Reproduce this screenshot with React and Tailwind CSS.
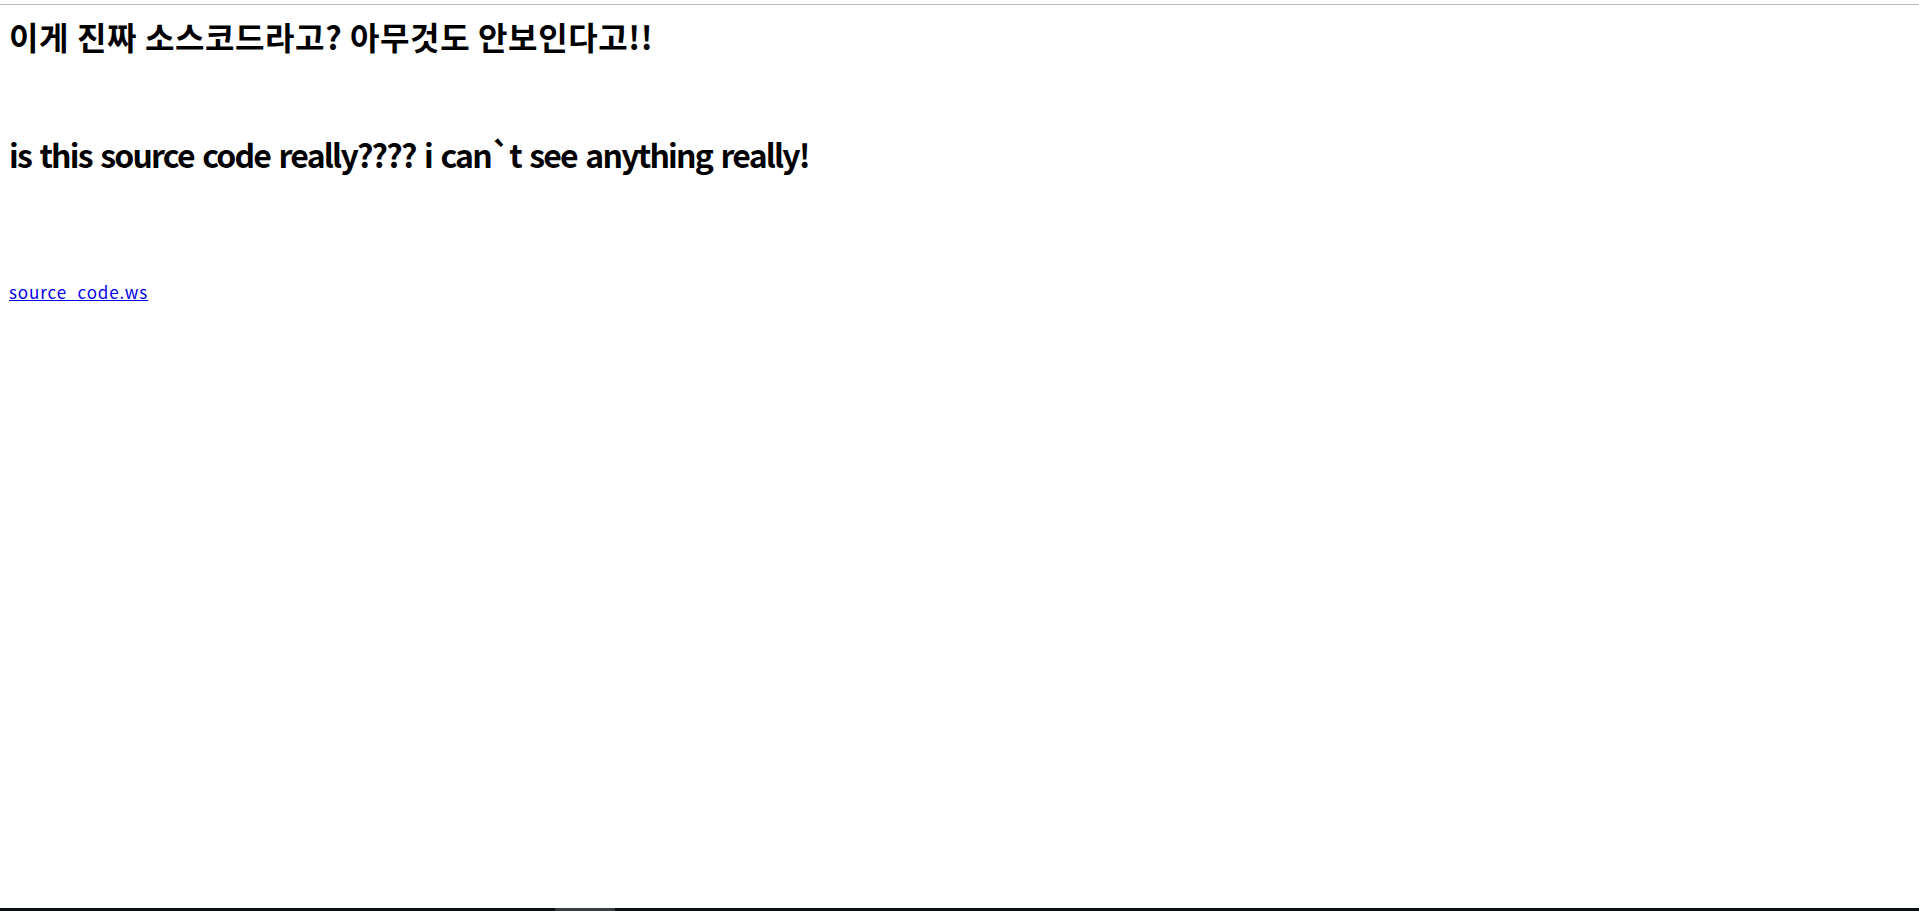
export default function App() {
  return (
    <div className="min-h-[911px] flex flex-col bg-white">
      <div className="h-[4px]" />
      <div className="h-px bg-[#bdbdbd]" />
      <main
        className="flex-1 flex flex-col items-start px-[9px] text-black"
        style={{ fontFamily: '"Noto Sans CJK KR", "Noto Sans", sans-serif' }}
      >
        <h1 className="mt-[11px] text-[32px] leading-[40px] font-bold tracking-[0.6px]">
          이게 진짜 소스코드라고? 아무것도 안보인다고!!
        </h1>
        <h1 className="mt-[78px] text-[32px] leading-[40px] font-bold tracking-[-1.8px] [word-spacing:3px]">
          is this source code really???? i can`t see anything really!
        </h1>
        <a href="#" className="mt-[107px] text-[17px] leading-[22px] tracking-[0.9px] text-[#0000ee] underline">
          source_code.ws
        </a>
      </main>
      <div className="h-[3px] flex bg-[#0b0f14]">
        <div className="w-[555px]" />
        <div className="w-[60px] bg-[#3a3d42]" />
      </div>
    </div>
  );
}
